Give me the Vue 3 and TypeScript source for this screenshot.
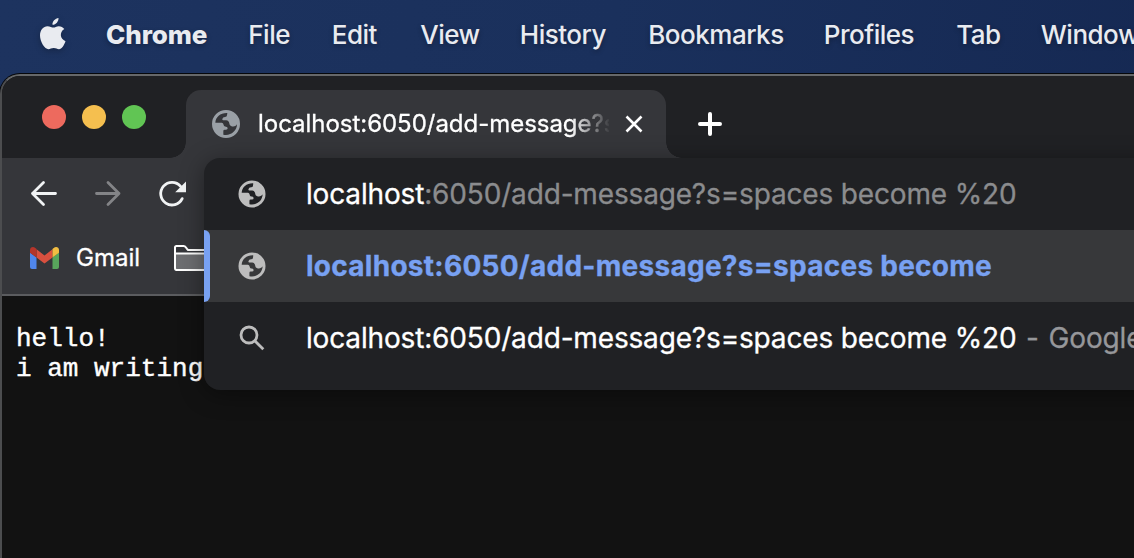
<script setup lang="ts">
interface MenuItem {
  label: string
  width: number
}

interface Suggestion {
  kind: 'page' | 'search'
  lead: string
  rest: string
  active: boolean
}

const menus: MenuItem[] = [
  { label: 'File', width: 42 },
  { label: 'Edit', width: 47 },
  { label: 'View', width: 58 },
  { label: 'History', width: 87 },
  { label: 'Bookmarks', width: 134 },
  { label: 'Profiles', width: 91 },
  { label: 'Tab', width: 43 },
  { label: 'Window', width: 97 },
]

const suggestions: Suggestion[] = [
  { kind: 'page', lead: 'localhost', rest: ':6050/add-message?s=spaces become %20', active: false },
  { kind: 'page', lead: 'localhost:6050/add-message?s=spaces become', rest: '', active: true },
  { kind: 'search', lead: 'localhost:6050/add-message?s=spaces become %20', rest: ' - Google Search', active: false },
]

const globe =
  'M42 0A42 42 0 1 1 42 84A42 42 0 1 1 42 0ZM46 9C26 8 11 21 10 38L29 38C33 38 34 41 35 45C36 49 38 50 42 50Q47 50 47 55Q47 59 42 59H38Q34 59 34 63V74C54 79 75 64 75 43C71 50 63 51 57 48C52 46 53 42 51 37Q49 31 43 31H34Q30 31 31 27Q32 21 39 21Q45 21 45 16Z'
</script>

<template>
  <div class="desktop">
    <header class="menubar">
      <svg class="apple" viewBox="0 0 26 32">
        <path d="M18.5 0c.3 3.400-2.700 6.900-6 6.800C12.100 3.600 15.300.4 18.500 0ZM13.500 9.600c1.300 0 3-1.400 5.300-1.400 2.200 0 4.300 1.200 5.500 2.900-5.200 3.100-4.300 10 1.200 12.100C24.200 27 21.700 31.200 19 31.200c-2 0-2.800-1.200-5.300-1.200s-3.400 1.200-5.200 1.200C4.700 31.200 0 23.700 0 17.500 0 11.700 3.600 8.200 7.400 8.200c2.600 0 4.500 1.400 6.100 1.400Z" />
      </svg>
      <span class="app-name">Chrome</span>
      <nav class="menus">
        <span v-for="m in menus" :key="m.label" class="menu" :style="{ width: m.width + 'px' }">{{ m.label }}</span>
      </nav>
    </header>

    <main class="window">
      <div class="tabstrip">
        <div class="lights">
          <i class="light red" /><i class="light yellow" /><i class="light green" />
        </div>
        <div class="tab">
          <svg class="tab-globe" viewBox="0 0 84 84"><path :d="globe" fill-rule="evenodd" /></svg>
          <span class="tab-title">localhost:6050/add-message?s=spaces</span>
          <svg class="close" viewBox="0 0 18 18"><path d="M1.500 1.500l15 15m0-15l-15 15" /></svg>
        </div>
        <svg class="plus" viewBox="0 0 24 24"><path d="M12 2v20M2 12h20" /></svg>
      </div>

      <div class="toolbar">
        <div class="nav">
          <svg class="nav-icon" viewBox="0 0 28 28"><path d="M13.500 2.500L2.500 13.500l11 11M2.500 13.500h23" /></svg>
          <svg class="nav-icon dim" viewBox="0 0 28 28"><path d="M14 2.500L25 13.500 14 24.500M25 13.500H2.500" /></svg>
          <svg class="nav-icon" viewBox="0 0 28 28">
            <path d="M24.200 18.600A11.300 11.300 0 1 1 22.600 6.300" />
            <path class="tip" d="M28 1.500V12.300H17.200Z" />
          </svg>
        </div>
        <div class="bookmarks">
          <svg class="gmail" viewBox="0 0 29 22">
            <path fill="#5087ed" d="M0 5.500l6.500 5V22H2a2 2 0 0 1-2-2Z" />
            <path fill="#58a65c" d="M29 5.500l-6.500 5V22H27a2 2 0 0 0 2-2Z" />
            <path fill="#d9503f" d="M6.500 2.200l8 6.200 8-6.200v8.300l-8 6-8-6Z" />
            <path fill="#b5352b" d="M0 3C0 .2 3-.9 5.300.9l1.200 1v8.700L0 5.700Z" />
            <path fill="#f1bd42" d="M29 3c0-2.800-3-3.900-5.300-2.100l-1.200 1v8.700l6.500-4.900Z" />
          </svg>
          <span class="bookmark-label">Gmail</span>
          <svg class="folder" viewBox="0 0 38 26">
            <path class="folder-fill" d="M1 8h36v17H1Z" />
            <path d="M1 23V2.500Q1 1 2.500 1H9.500Q11 1 12 2.500T14 5H37V25H2.500Q1 25 1 23ZM1 8.500H37" />
          </svg>
        </div>
      </div>

      <pre class="page">hello!
i am writing</pre>

      <section class="dropdown">
        <div v-for="(s, i) in suggestions" :key="i" class="row" :class="{ active: s.active }">
          <svg v-if="s.kind === 'page'" class="row-icon" viewBox="-1.500 -1.500 87 87"><path :d="globe" fill-rule="evenodd" /></svg>
          <svg v-else class="row-icon glass" viewBox="0 0 28 28"><circle cx="11" cy="11" r="8" /><path d="M17 17l8.300 8.300" /></svg>
          <span class="row-text"><span class="lead">{{ s.lead }}</span><span class="muted" :class="{ described: s.kind === 'search' }">{{ s.rest }}</span></span>
        </div>
      </section>
    </main>
  </div>
</template>

<style>
body {
  margin: 0;
  overflow: hidden;
  background: #1b305b;
}
</style>

<style scoped>
.desktop {
  width: 1134px;
  height: 558px;
  overflow: hidden;
  display: flex;
  flex-direction: column;
  font-family: Inter, "Liberation Sans", sans-serif;
  background: linear-gradient(100deg, #1d335f, #1a305c 50%, #152852);
  box-sizing: border-box;
}
svg {
  display: block;
  flex: none;
}
.menubar {
  height: 74px;
  flex: none;
  display: flex;
  align-items: center;
  padding: 0 0 5px 40px;
  box-sizing: border-box;
  color: #e9ebf0;
  font-size: 26px;
  font-weight: 500;
  white-space: nowrap;
  text-shadow: 0 2px 5px rgba(0, 0, 0, 0.3);
}
.apple {
  width: 26px;
  height: 32px;
  margin-right: 40px;
  margin-top: -1px;
  fill: #e9ebf0;
  filter: drop-shadow(0 2px 3px rgba(0, 0, 0, 0.25));
}
.app-name {
  width: 102px;
  font-weight: 800;
  letter-spacing: -0.1px;
}
.menus {
  display: flex;
  gap: 41.500px;
  margin-left: 41px;
}
.menu {
  letter-spacing: -0.5px;
}
.window {
  position: relative;
  width: 1180px;
  flex: 1;
  box-sizing: border-box;
  display: flex;
  flex-direction: column;
  border: 2px solid #66686a;
  border-left-color: #4c4d4f;
  border-bottom: 0;
  border-radius: 20px 0 0 0;
  box-shadow: 0 0 0 1px #05070b;
  background: #121212;
  overflow: hidden;
}
.tabstrip {
  height: 82px;
  flex: none;
  display: flex;
  background: #202124;
}
.lights {
  display: flex;
  gap: 16px;
  width: 144px;
  padding: 29px 0 0 40px;
  box-sizing: border-box;
}
.light {
  width: 24px;
  height: 24px;
  border-radius: 50%;
}
.red { background: #ed6a5e; }
.yellow { background: #f5bf4f; }
.green { background: #61c554; }
.tab {
  position: relative;
  width: 480px;
  height: 68px;
  margin: 14px 0 0 40px;
  box-sizing: border-box;
  padding-left: 26px;
  display: flex;
  align-items: center;
  border-radius: 15px 15px 0 0;
  background: #35363a;
}
.tab::before,
.tab::after {
  content: "";
  position: absolute;
  bottom: 0;
  width: 16px;
  height: 16px;
}
.tab::before {
  left: -16px;
  background: radial-gradient(circle at 0 0, transparent 15.5px, #35363a 16px);
}
.tab::after {
  right: -16px;
  background: radial-gradient(circle at 100% 0, transparent 15.5px, #35363a 16px);
}
.tab-globe {
  width: 28px;
  height: 28px;
  fill: #9aa0a6;
}
.tab-title {
  width: 351px;
  margin-left: 18px;
  overflow: hidden;
  white-space: nowrap;
  font-size: 24px;
  line-height: 34px;
  letter-spacing: -0.03px;
  color: #fff;
  -webkit-text-stroke: 0.3px;
  mask-image: linear-gradient(90deg, #000 312px, transparent 353px);
}
.close {
  width: 18px;
  height: 18px;
  margin-left: 16px;
  fill: none;
  stroke: #fff;
  stroke-width: 2.600;
}
.plus {
  width: 24px;
  height: 24px;
  margin: 36px 0 0 32px;
  fill: none;
  stroke: #fff;
  stroke-width: 4;
  stroke-linecap: round;
}
.toolbar {
  height: 138px;
  flex: none;
  box-sizing: border-box;
  border-bottom: 2px solid #5b5c5f;
  background: #35363a;
}
.nav {
  display: flex;
  gap: 36px;
  padding: 22px 0 0 28px;
}
.nav-icon {
  width: 28px;
  height: 28px;
  fill: none;
  stroke: #f1f3f4;
  stroke-width: 2.800;
  stroke-linecap: round;
  stroke-linejoin: round;
}
.dim { stroke: #838487; }
.tip {
  fill: #f1f3f4;
  stroke: none;
}
.bookmarks {
  display: flex;
  align-items: center;
  height: 40px;
  margin: 30px 0 0 27.500px;
}
.gmail {
  width: 29px;
  height: 22px;
}
.bookmark-label {
  width: 80px;
  margin: -2px 0 0 17.500px;
  font-size: 24px;
  color: #fff;
  -webkit-text-stroke: 0.3px;
}
.folder {
  width: 38px;
  height: 26px;
  margin-left: 18px;
  fill: none;
  stroke: #fff;
  stroke-width: 2;
}
.folder-fill {
  fill: #6d6e71;
  stroke: none;
}
.page {
  margin: 0;
  padding: 28px 0 0 14px;
  font: 26px/30px "Liberation Mono", monospace;
  color: #fff;
  -webkit-text-stroke: 0.4px;
}
.dropdown {
  position: absolute;
  left: 202px;
  top: 82px;
  width: 980px;
  height: 232px;
  border-radius: 16px 0 0 16px;
  background: #202124;
  overflow: hidden;
  box-shadow: 0 4px 24px rgba(0, 0, 0, 0.4);
}
.row {
  position: relative;
  height: 72px;
  display: flex;
  align-items: center;
  padding-left: 34px;
}
.active { background: #37383a; }
.active::before {
  content: "";
  position: absolute;
  left: 0;
  top: 0;
  width: 6px;
  height: 72px;
  border-radius: 0 6px 6px 0;
  background: #78a1f2;
}
.row-icon {
  width: 28px;
  height: 28px;
  fill: #bdbdbd;
}
.glass {
  fill: none;
  stroke: #bdbdbd;
  stroke-width: 2.800;
}
.row-text {
  margin-left: 40px;
  white-space: pre;
  font-size: 28px;
  letter-spacing: -0.160px;
  color: #fff;
  -webkit-text-stroke: 0.3px;
}
.active .row-text {
  color: #78a1f2;
  font-weight: 700;
  letter-spacing: 0.270px;
}
.muted { color: #8b8c8e; }
.described {
  color: #96979a;
  word-spacing: 2px;
}
</style>
